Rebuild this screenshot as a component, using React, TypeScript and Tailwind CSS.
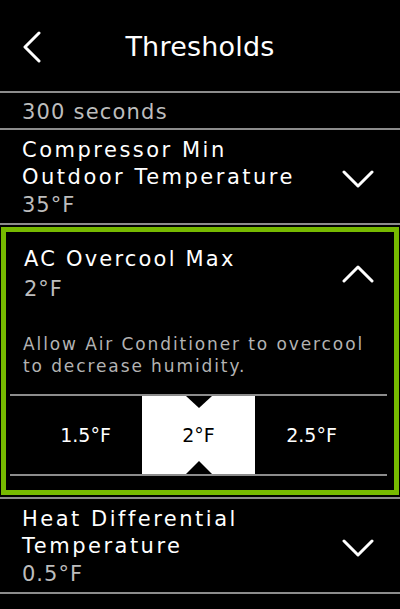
import React from "react";

const font = { fontFamily: "'DejaVu Sans', 'Open Sans', sans-serif" };

function ChevronLeft() {
  return (
    <svg width="20" height="32" viewBox="0 0 20 32" fill="none">
      <polyline points="17,2 3,16 17,30" stroke="white" strokeWidth="3" strokeLinecap="round" strokeLinejoin="round" />
    </svg>
  );
}

function Chevron({ up }: { up?: boolean }) {
  return (
    <svg width="32" height="20" viewBox="0 0 32 20" fill="none">
      {up ? (
        <polyline points="2,17 16,3 30,17" stroke="white" strokeWidth="3" strokeLinecap="round" strokeLinejoin="round" />
      ) : (
        <polyline points="2,3 16,17 30,3" stroke="white" strokeWidth="3" strokeLinecap="round" strokeLinejoin="round" />
      )}
    </svg>
  );
}

function Row({ title, value }: { title: string[]; value: string }) {
  return (
    <div className="flex h-[95px] items-center justify-between border-b-2 border-[#8c8c8c] pl-[22px] pr-[26px]">
      <div className="flex flex-col pt-[3px]">
        {title.map((t) => (
          <span key={t} className="text-[21px] leading-[27px] text-white tracking-[2.5px]">
            {t}
          </span>
        ))}
        <span className="mt-[1px] text-[21px] leading-[27px] text-[#bdbdbd] tracking-[1px]">{value}</span>
      </div>
      <div className="mt-[4px]">
        <Chevron />
      </div>
    </div>
  );
}

export default function App() {
  return (
    <div className="relative h-[609px] w-[400px] overflow-hidden bg-black" style={font}>
      <div className="flex h-[93px] items-center border-b-2 border-[#8c8c8c] pt-[3px]">
        <div className="ml-[22px] flex w-[20px] items-center">
          <ChevronLeft />
        </div>
        <div className="flex-1 pr-[42px] text-center text-[27px] tracking-[0.2px] text-white">Thresholds</div>
      </div>
      <div className="flex h-[37px] items-center border-b-2 border-[#8c8c8c] pl-[22px] pt-[4px]">
        <span className="text-[21px] text-[#bdbdbd] tracking-[1.2px]">300 seconds</span>
      </div>
      <Row title={["Compressor Min", "Outdoor Temperature"]} value="35°F" />
      <div className="mx-[1px] mt-[2px] flex h-[268px] flex-col border-[5px] border-[#76b900]">
        <div className="flex items-start justify-between pl-[18px] pr-[20px] pt-[12px]">
          <div className="flex flex-col">
            <span className="text-[21px] leading-[30px] text-white tracking-[2.2px]">AC Overcool Max</span>
            <span className="text-[21px] leading-[30px] text-[#bdbdbd] tracking-[1px]">2°F</span>
          </div>
          <div className="mt-[20px]">
            <Chevron up />
          </div>
        </div>
        <p className="mt-[29px] pl-[17px] pr-[20px] text-[17px] leading-[22px] text-[#b3b3b3] tracking-[1.9px]">
          Allow Air Conditioner to overcool to decrease humidity.
        </p>
        <div className="ml-[4px] mr-[7px] mt-[17px] flex h-[82px] border-y-2 border-[#8c8c8c]">
          <div className="flex w-[19px]" />
          <div className="flex w-[113px] items-center justify-center text-[19px] text-white">1.5°F</div>
          <div className="relative flex w-[113px] items-center justify-center bg-white text-[19px] text-black">
            <span className="absolute left-[44px] top-0 h-0 w-0 border-x-[13px] border-t-[12px] border-x-transparent border-t-black" />
            2°F
            <span className="absolute bottom-0 left-[44px] h-0 w-0 border-x-[13px] border-b-[13px] border-x-transparent border-b-black" />
          </div>
          <div className="flex w-[113px] items-center justify-center text-[19px] text-white">2.5°F</div>
        </div>
      </div>
      <div className="mt-[2px] border-t-2 border-[#8c8c8c]" />
      <Row title={["Heat Differential", "Temperature"]} value="0.5°F" />
    </div>
  );
}
